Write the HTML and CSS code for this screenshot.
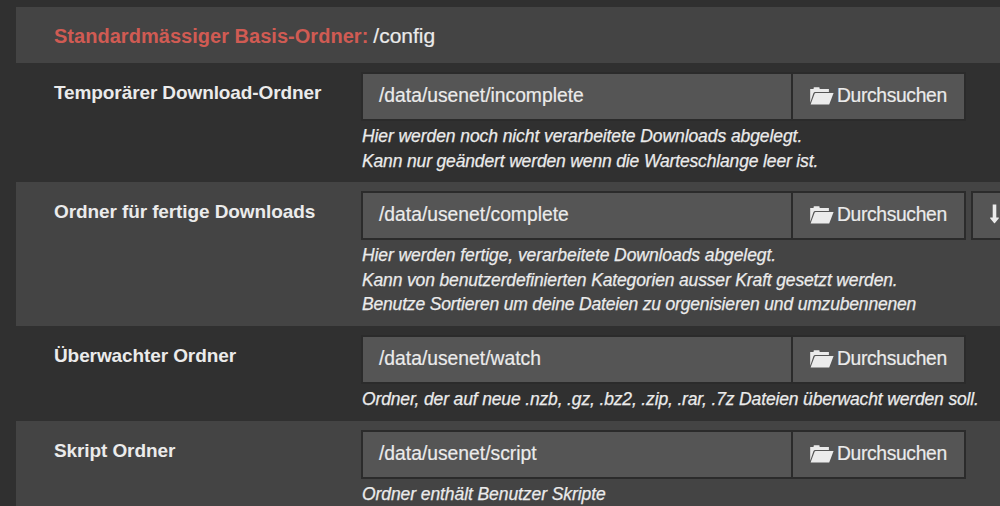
FILE: index.html
```html
<!DOCTYPE html>
<html lang="de">
<head>
<meta charset="utf-8">
<title>Ordner</title>
<link rel="stylesheet" href="styles.css">
</head>
<body>
<svg class="defs" width="0" height="0">
  <symbol id="folder-open" viewBox="0 0 24 18">
    <path d="M0.2 15.8V1.9H3.6V0.9Q3.6 0.3 4.2 0.3H9Q9.6 0.3 9.6 0.9V1.9H18.9V4.9H5.2Q4 4.9 3.4 6.2Z"/>
    <path d="M5.6 5.9H23.6L19.2 17.6H0.6L4.6 6.7Q4.9 5.9 5.6 5.9Z"/>
  </symbol>
  <symbol id="arrow-down" viewBox="0 0 9 20">
    <path d="M2.7 0.4H6.3V13.4H8.6Q9.2 13.7 8.7 14.4L5 19Q4.5 19.5 4 19L0.3 14.4Q-0.2 13.7 0.4 13.4H2.7Z"/>
  </symbol>
</svg>
<main class="settings">
  <section class="row row-base alt">
    <p class="base"><strong class="base-label">Standardmässiger Basis-Ordner:</strong><span class="base-path">/config</span></p>
  </section>
  <section class="row row-temp">
    <label class="name">Temporärer Download-Ordner</label>
    <div class="field">
      <div class="controls">
        <div class="group"><span class="input">/data/usenet/incomplete</span><button class="browse"><svg class="folder"><use href="#folder-open"/></svg><span>Durchsuchen</span></button></div>
      </div>
      <p class="help"><span class="loose">Hier werden noch nicht verarbeitete Downloads abgelegt.</span><br>Kann nur geändert werden wenn die Warteschlange leer ist.</p>
    </div>
  </section>
  <section class="row row-complete alt">
    <label class="name">Ordner für fertige Downloads</label>
    <div class="field">
      <div class="controls">
        <div class="group"><span class="input">/data/usenet/complete</span><button class="browse"><svg class="folder"><use href="#folder-open"/></svg><span>Durchsuchen</span></button></div>
        <button class="sort"><svg class="arrow"><use href="#arrow-down"/></svg></button>
      </div>
      <p class="help"><span class="loose">Hier werden fertige, verarbeitete Downloads abgelegt.</span><br>Kann von benutzerdefinierten Kategorien ausser Kraft gesetzt werden.<br><span class="tight">Benutze Sortieren um deine Dateien zu orgenisieren und umzubennenen</span></p>
    </div>
  </section>
  <section class="row row-watch">
    <label class="name">Überwachter Ordner</label>
    <div class="field">
      <div class="controls">
        <div class="group"><span class="input">/data/usenet/watch</span><button class="browse"><svg class="folder"><use href="#folder-open"/></svg><span>Durchsuchen</span></button></div>
      </div>
      <p class="help">Ordner, der auf neue .nzb, .gz, .bz2, .zip, .rar, .7z Dateien überwacht werden soll.</p>
    </div>
  </section>
  <section class="row row-script alt">
    <label class="name">Skript Ordner</label>
    <div class="field">
      <div class="controls">
        <div class="group"><span class="input">/data/usenet/script</span><button class="browse"><svg class="folder"><use href="#folder-open"/></svg><span>Durchsuchen</span></button></div>
      </div>
      <p class="help"><span class="loose">Ordner enthält Benutzer Skripte</span></p>
    </div>
  </section>
</main>
</body>
</html>
```
FILE: styles.css
```css
* { box-sizing: border-box; }
html, body { height: 100%; }
body {
  margin: 0;
  overflow: hidden;
  background: #303030;
  color: #ebebeb;
  font: 19px/24px "Liberation Sans", Arial, sans-serif;
}
p { margin: 0; }
.defs { display: block; width: 0; height: 0; }
.settings { padding: 7px 0 0 16px; }
.row { display: flex; padding: 9px 0 0 38px; }
.alt { background: #444; }
.row-base { height: 56px; padding-top: 17px; }
.row-temp { height: 119px; }
.row-complete { height: 144px; }
.row-watch { height: 95px; }
.row-script { height: 95px; }
.base { display: flex; gap: 5px; font-size: 20px; }
.base-label { color: #d05b53; letter-spacing: 0.03px; }
.base-path { font-size: 21px; -webkit-text-stroke: 0.2px #ebebeb; }
.name {
  flex: none;
  width: 307px;
  padding-top: 9px;
  font-weight: bold;
  letter-spacing: -0.1px;
  white-space: nowrap;
}
.field { flex: none; }
.controls { display: flex; gap: 5px; }
.group {
  display: grid;
  grid-template-columns: 428px 1fr;
  width: 605px;
  height: 49px;
  border: 2px solid #2b2b2b;
}
.input {
  padding: 10px 16px;
  background: #555;
  font-size: 19.3px;
  -webkit-text-stroke: 0.2px #ebebeb;
}
.browse {
  display: flex;
  align-items: center;
  gap: 3px;
  padding: 0 0 2px 17px;
  border: 0;
  border-left: 2px solid #2b2b2b;
  background: #555;
  color: inherit;
  font: inherit;
  font-size: 19.3px;
  letter-spacing: -0.35px;
  -webkit-text-stroke: 0.2px #ebebeb;
}
.folder { flex: none; width: 24px; height: 18px; fill: #ebebeb; -webkit-text-stroke: 0; }
.sort {
  display: flex;
  align-items: center;
  width: 60px;
  height: 49px;
  padding: 0 0 4px 17px;
  border: 2px solid #2b2b2b;
  background: #555;
}
.arrow { width: 9px; height: 20px; fill: #ebebeb; }
.help {
  padding: 3px 0 0 1px;
  font-size: 17.5px;
  line-height: 24.5px;
  font-style: italic;
  letter-spacing: -0.15px;
  white-space: nowrap;
  -webkit-text-stroke: 0.25px #ebebeb;
}
.loose { letter-spacing: -0.08px; }
.tight { letter-spacing: -0.18px; }
```
